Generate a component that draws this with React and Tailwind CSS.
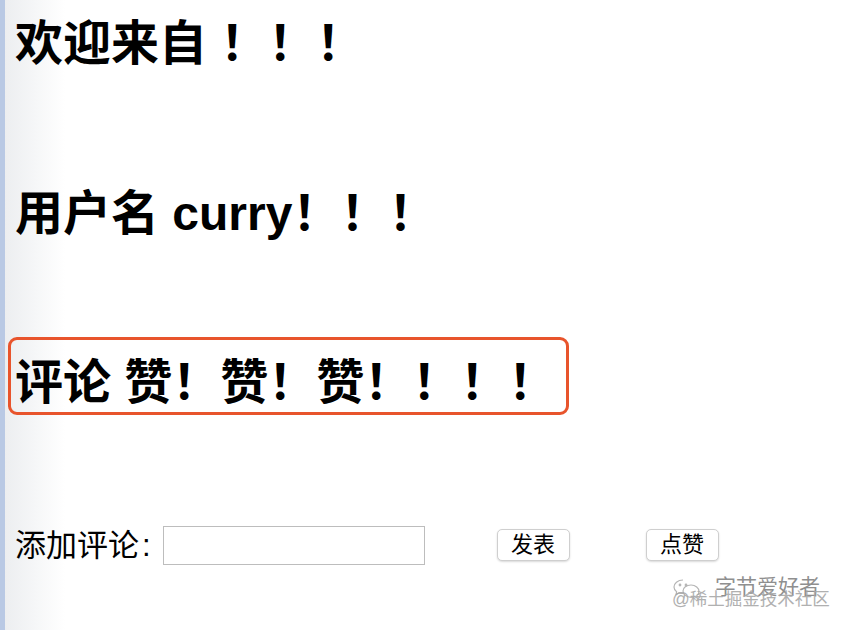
import React from 'react';

const font = { fontFamily: '"Liberation Sans", "Noto Sans CJK SC", sans-serif' };

function WeChatMark() {
    return (
        <svg width="30" height="24" viewBox="0 0 30 24" fill="none" stroke="#b5b5b5" strokeWidth="1.2">
            <path d="M11 2C5.5 2 2 5.5 2 9c0 2 1 3.6 2.6 4.8L4 16.5l3-1.6c1.2.4 2.6.6 4 .6" />
            <path d="M19 7c4.6 0 8 3 8 6.4 0 1.8-.9 3.3-2.3 4.4l.6 2.4-2.8-1.4c-1.1.4-2.3.5-3.5.5-4.6 0-8-3-8-6.4S14.4 7 19 7z" />
            <circle cx="8" cy="7" r="0.8" fill="#b5b5b5" />
            <circle cx="14" cy="7" r="0.8" fill="#b5b5b5" />
        </svg>
    );
}

export default function App() {
    return (
        <div className="w-[848px] h-[630px] flex bg-white text-black overflow-hidden" style={font}>
            <div className="w-[5px] bg-[#b9c9e4]" />
            <div className="relative flex-1 flex flex-col items-start pl-[3px] pt-[20px] bg-[linear-gradient(to_right,#eceef0,#ffffff_60px)]">
                <div className="ml-[7px] h-[48px] text-[48px] leading-[48px] font-bold whitespace-pre">欢迎来自 ！！！</div>

                <div className="ml-[7px] mt-[122px] h-[48px] text-[48px] leading-[48px] font-bold whitespace-pre">用户名 curry！！！</div>

                <div className="mt-[99px] w-[561px] h-[78px] border-[3px] border-[#e8542c] rounded-[9px] pl-[4px] pt-[19px]">
                    <div className="h-[48px] text-[48px] leading-[48px] font-bold whitespace-pre">评论 赞！赞！赞！！！！</div>
                </div>

                <div className="ml-[7px] mt-[110px] flex items-center h-[40px]">
                    <span className="text-[31px] leading-none">添加评论<span className="ml-[3px]">:</span></span>
                    <input className="ml-[12px] w-[262px] h-[39px] border border-[#bdbdbd] bg-white outline-none" />
                    <button className="ml-[72px] w-[73px] h-[32px] text-[22px] leading-none rounded-[5px] border border-[#cfcfcf] bg-white shadow-[0_1px_2px_rgba(0,0,0,0.15)]">发表</button>
                    <button className="ml-[76px] w-[73px] h-[32px] text-[22px] leading-none rounded-[5px] border border-[#cfcfcf] bg-white shadow-[0_1px_2px_rgba(0,0,0,0.15)]">点赞</button>
                </div>

                <div className="absolute left-[667px] top-[576px] w-[170px] h-[40px]">
                    <div className="absolute left-0 top-[2px]">
                        <WeChatMark />
                    </div>
                    <div className="absolute left-[43px] top-[0px] text-[21px] leading-none text-[#8f8f8f]">字节爱好者</div>
                    <div className="absolute left-0 top-[15px] text-[17.5px] leading-none text-[#a8a8a8] opacity-90">@稀土掘金技术社区</div>
                </div>
            </div>
        </div>
    );
}
